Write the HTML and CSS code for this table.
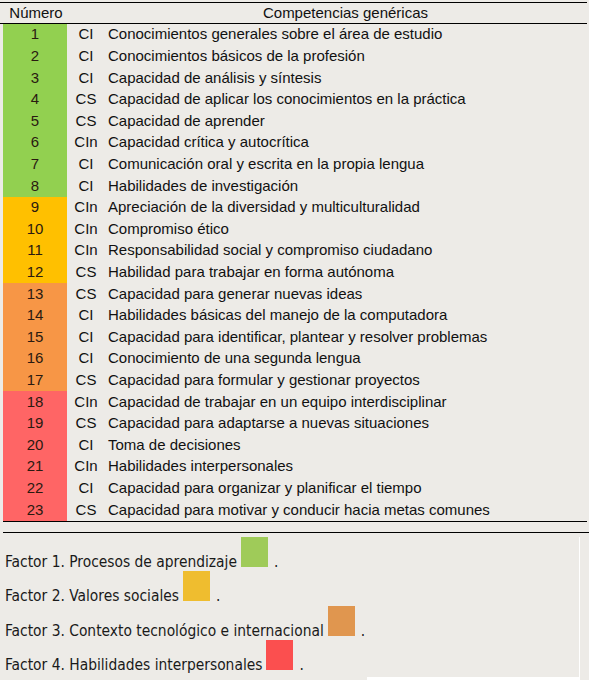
FILE: index.html
```html
<!DOCTYPE html>
<html lang="es">
<head>
<meta charset="utf-8">
<title>Competencias genéricas</title>
<link rel="stylesheet" href="styles.css">
</head>
<body>
<div class="sheet">
  <div class="head">
    <div class="c-num">Número</div>
    <div class="c-code"></div>
    <div class="c-desc">Competencias genéricas</div>
  </div>
  <div class="rows">
    <div class="row f1"><div class="c-num">1</div><div class="c-code">CI</div><div class="c-desc">Conocimientos generales sobre el área de estudio</div></div>
    <div class="row f1"><div class="c-num">2</div><div class="c-code">CI</div><div class="c-desc">Conocimientos básicos de la profesión</div></div>
    <div class="row f1"><div class="c-num">3</div><div class="c-code">CI</div><div class="c-desc">Capacidad de análisis y síntesis</div></div>
    <div class="row f1"><div class="c-num">4</div><div class="c-code">CS</div><div class="c-desc">Capacidad de aplicar los conocimientos en la práctica</div></div>
    <div class="row f1"><div class="c-num">5</div><div class="c-code">CS</div><div class="c-desc">Capacidad de aprender</div></div>
    <div class="row f1"><div class="c-num">6</div><div class="c-code">CIn</div><div class="c-desc">Capacidad crítica y autocrítica</div></div>
    <div class="row f1"><div class="c-num">7</div><div class="c-code">CI</div><div class="c-desc">Comunicación oral y escrita en la propia lengua</div></div>
    <div class="row f1"><div class="c-num">8</div><div class="c-code">CI</div><div class="c-desc">Habilidades de investigación</div></div>
    <div class="row f2"><div class="c-num">9</div><div class="c-code">CIn</div><div class="c-desc">Apreciación de la diversidad y multiculturalidad</div></div>
    <div class="row f2"><div class="c-num">10</div><div class="c-code">CIn</div><div class="c-desc">Compromiso ético</div></div>
    <div class="row f2"><div class="c-num">11</div><div class="c-code">CIn</div><div class="c-desc">Responsabilidad social y compromiso ciudadano</div></div>
    <div class="row f2"><div class="c-num">12</div><div class="c-code">CS</div><div class="c-desc">Habilidad para trabajar en forma autónoma</div></div>
    <div class="row f3"><div class="c-num">13</div><div class="c-code">CS</div><div class="c-desc">Capacidad para generar nuevas ideas</div></div>
    <div class="row f3"><div class="c-num">14</div><div class="c-code">CI</div><div class="c-desc">Habilidades básicas del manejo de la computadora</div></div>
    <div class="row f3"><div class="c-num">15</div><div class="c-code">CI</div><div class="c-desc">Capacidad para identificar, plantear y resolver problemas</div></div>
    <div class="row f3"><div class="c-num">16</div><div class="c-code">CI</div><div class="c-desc">Conocimiento de una segunda lengua</div></div>
    <div class="row f3"><div class="c-num">17</div><div class="c-code">CS</div><div class="c-desc">Capacidad para formular y gestionar proyectos</div></div>
    <div class="row f4"><div class="c-num">18</div><div class="c-code">CIn</div><div class="c-desc">Capacidad de trabajar en un equipo interdisciplinar</div></div>
    <div class="row f4"><div class="c-num">19</div><div class="c-code">CS</div><div class="c-desc">Capacidad para adaptarse a nuevas situaciones</div></div>
    <div class="row f4"><div class="c-num">20</div><div class="c-code">CI</div><div class="c-desc">Toma de decisiones</div></div>
    <div class="row f4"><div class="c-num">21</div><div class="c-code">CIn</div><div class="c-desc">Habilidades interpersonales</div></div>
    <div class="row f4"><div class="c-num">22</div><div class="c-code">CI</div><div class="c-desc">Capacidad para organizar y planificar el tiempo</div></div>
    <div class="row f4"><div class="c-num">23</div><div class="c-code">CS</div><div class="c-desc">Capacidad para motivar y conducir hacia metas comunes</div></div>
  </div>
  <div class="rule2"></div>
  <div class="legend">
    <div class="leg-row"><span class="leg-text">Factor 1. Procesos de aprendizaje</span><span class="sw sw1"></span><span class="dot">.</span></div>
    <div class="leg-row"><span class="leg-text">Factor 2. Valores sociales</span><span class="sw sw2"></span><span class="dot">.</span></div>
    <div class="leg-row"><span class="leg-text">Factor 3. Contexto tecnológico e internacional</span><span class="sw sw3"></span><span class="dot">.</span></div>
    <div class="leg-row"><span class="leg-text">Factor 4. Habilidades interpersonales</span><span class="sw sw4"></span><span class="dot">.</span></div>
  </div>
  <div class="foot"></div>
</div>
</body>
</html>
```

FILE: styles.css
```css
html, body {
  margin: 0;
  padding: 0;
  background: #edebe7;
}
body {
  width: 589px;
  height: 680px;
  overflow: hidden;
  font-family: "Liberation Sans", Arial, sans-serif;
  color: #111;
}
.sheet {
  padding-top: 2px;
}
.head {
  display: grid;
  grid-template-columns: 64px 37px 1fr;
  width: 587px;
  height: 22px;
  padding-left: 3px;
  box-sizing: border-box;
  border-top: 1px solid #000;
  border-bottom: 1px solid #000;
  font-size: 15px;
  line-height: 20px;
}
.head .c-num {
  text-align: center;
  padding-left: 2px;
}
.head .c-desc {
  text-align: center;
}
.rows {
  display: grid;
  grid-template-rows: repeat(23, 1fr);
  height: 497px;
  margin-left: 3px;
  width: 584px;
  border-bottom: 1px solid #000;
}
.row {
  display: grid;
  grid-template-columns: 64px 37px 1fr;
  align-items: center;
  font-size: 15px;
  line-height: 17px;
  padding-bottom: 2px;
}
.row .c-num {
  align-self: stretch;
  display: flex;
  align-items: center;
  justify-content: center;
  margin-bottom: -2px;
  padding-bottom: 2px;
  color: #2a1a10;
}
.row .c-code {
  text-align: center;
  padding-left: 1px;
}
.row .c-desc {
  padding-left: 4px;
  white-space: nowrap;
}
.f1 .c-num { background: #92d050; }
.f2 .c-num { background: #ffc000; }
.f3 .c-num { background: #f79646; }
.f4 .c-num { background: #ff6565; }
.rule2 {
  margin-top: 10px;
  margin-left: 3px;
  width: 586px;
  border-top: 1px solid #000;
}
.legend {
  width: 580px;
  box-sizing: border-box;
  border-right: 1px solid #fff;
  margin-top: 4px;
  padding-left: 5px;
  height: 140px;
  font-family: "DejaVu Sans Condensed", "DejaVu Sans", sans-serif;
  font-size: 15.4px;
  color: #1a1a1a;
}
.leg-row {
  display: flex;
  align-items: baseline;
  height: 34.4px;
}
.sw {
  display: inline-block;
  width: 27px;
  height: 30px;
  margin-left: 4px;
}
.sw1 { background: #9fcb59; }
.sw2 { background: #efbd2f; }
.sw3 { background: #e0964f; }
.sw4 { background: #fb4f4f; }
.dot {
  margin-left: 6px;
}
.foot {
  margin-left: 367px;
  width: 213px;
  height: 3px;
  background: #fff;
}
```
